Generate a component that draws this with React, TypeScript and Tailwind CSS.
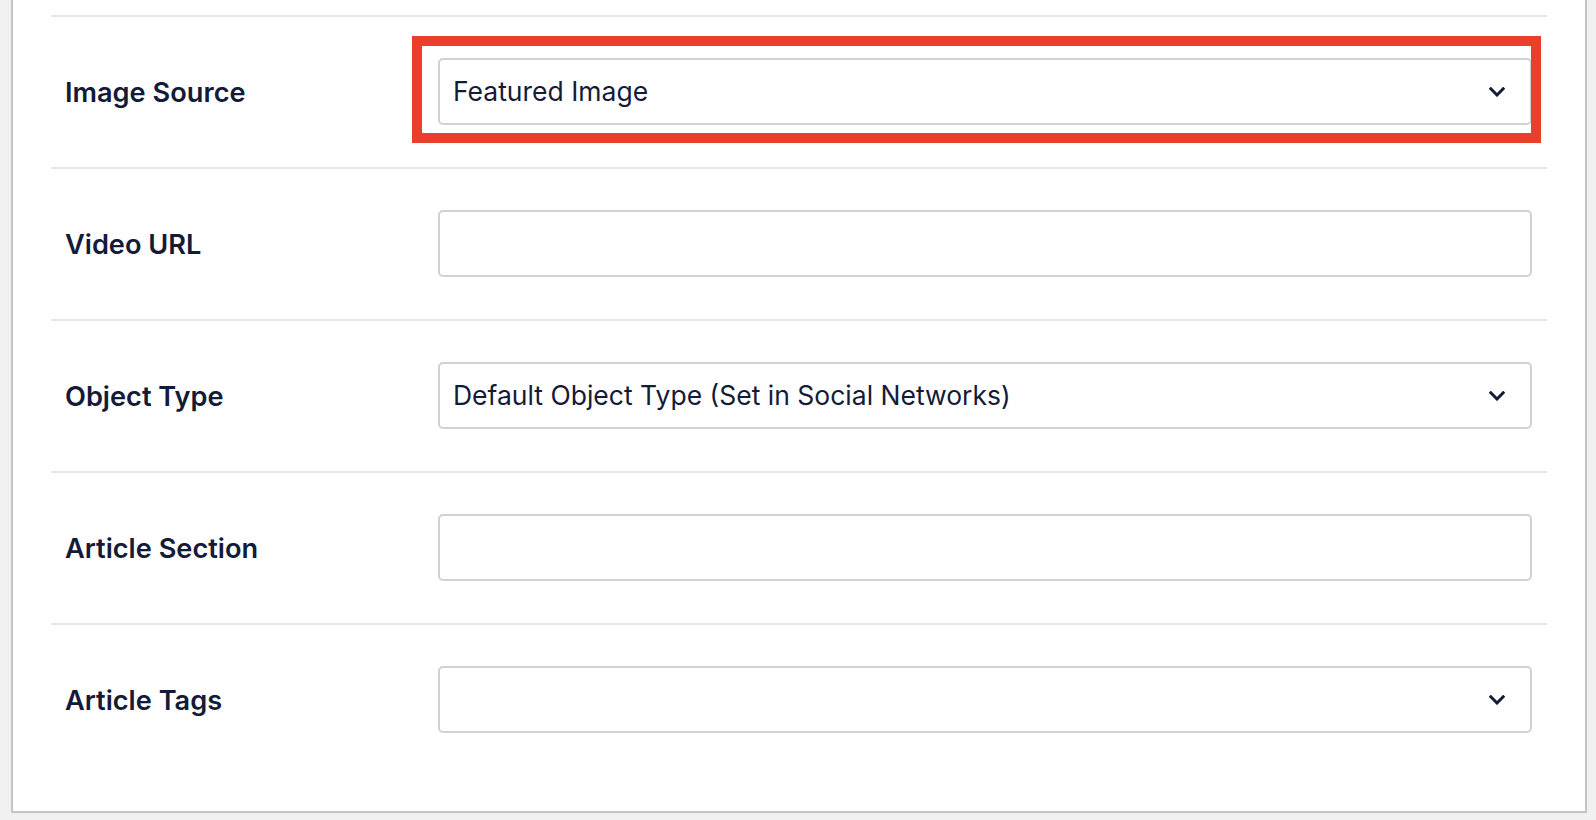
import React from 'react';

const Chevron = () => (
  <svg width="16" height="10" viewBox="0 0 16 10" fill="none" className="shrink-0">
    <path d="M1.8 1.8 L8 8 L14.2 1.8" stroke="#141b38" strokeWidth="3" strokeLinecap="square" />
  </svg>
);

interface FieldProps {
  value?: string;
  select?: boolean;
}

const Field: React.FC<FieldProps> = ({ value = '', select }) => (
  <div className="flex h-[67px] flex-1 items-center justify-between rounded-[5px] border-2 border-[#d0d1d6] bg-white pl-[13px] pr-[25px]">
    <span className="text-[26.5px] leading-none text-[#141b38]">{value}</span>
    {select && <Chevron />}
  </div>
);

const rows: Array<{ label: string; value?: string; select?: boolean }> = [
  { label: 'Image Source', value: 'Featured Image', select: true },
  { label: 'Video URL' },
  { label: 'Object Type', value: 'Default Object Type (Set in Social Networks)', select: true },
  { label: 'Article Section' },
  { label: 'Article Tags', select: true },
];

export default function App() {
  return (
    <div
      className="flex h-[820px] w-[1596px] flex-col overflow-hidden bg-[#f0f0f1] pl-[11px] pr-[9px] pb-[7px]"
      style={{ fontFamily: 'Inter, "Noto Sans", sans-serif' }}
    >
      <div className="flex flex-1 flex-col border-x-2 border-b-2 border-[#c3c4c7] bg-white px-[38px] pt-[15px]">
        {rows.map((row, i) => (
          <div
            key={row.label}
            className={`flex items-center border-t-2 border-[#e6e6e8] pl-[14px] pr-[15px] pt-[41px] ${
              i === rows.length - 1 ? 'pb-0' : 'pb-[42px]'
            }`}
          >
            <div className="mt-[4px] w-[373px] shrink-0 text-[27.2px] font-semibold text-[#141b38]">{row.label}</div>
            {i === 0 ? (
              <div className="relative flex flex-1">
                <Field value={row.value} select={row.select} />
                {/* highlight box drawn over the first field */}
                <div className="pointer-events-none absolute -left-[26px] -right-[9px] -top-[22px] -bottom-[18px] border-[10px] border-[#e8402a]" />
              </div>
            ) : (
              <Field value={row.value} select={row.select} />
            )}
          </div>
        ))}
      </div>
    </div>
  );
}
